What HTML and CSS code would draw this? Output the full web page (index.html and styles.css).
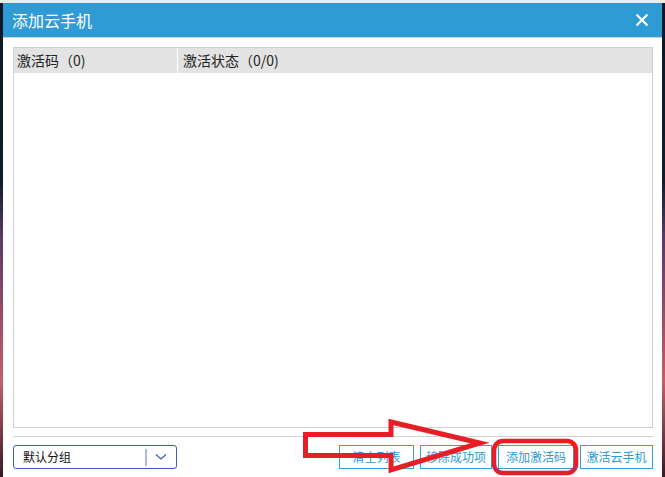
FILE: index.html
```html
<!DOCTYPE html>
<html lang="zh-CN">
<head>
    <meta charset="UTF-8">
    <title>添加云手机</title>
    <link rel="stylesheet" href="styles.css">
</head>
<body>
    <div class="dialog">
        <div class="titlebar">
            <span class="title">添加云手机</span>
            <svg class="close" width="14" height="14" viewBox="0 0 14 14">
                <path d="M1.5 1.5 L12.5 12.5 M12.5 1.5 L1.5 12.5" stroke="#fff" stroke-width="2.2" fill="none"/>
            </svg>
        </div>
        <div class="content">
            <div class="list">
                <div class="list-head">
                    <div class="col">激活码（0)</div>
                    <div class="col">激活状态（0/0)</div>
                </div>
            </div>
            <div class="sep"></div>
            <div class="footer">
                <div class="select">
                    <span class="select-text">默认分组</span>
                    <span class="select-line"></span>
                    <svg class="chevron" width="12" height="8" viewBox="0 0 12 8">
                        <polyline points="1,1.5 6,6 11,1.5" stroke="#3b5fc9" stroke-width="1.3" fill="none"/>
                    </svg>
                </div>
                <div class="buttons">
                    <button class="btn btn-clear">清空列表</button>
                    <button class="btn btn-remove">移除成功项</button>
                    <button class="btn btn-add">添加激活码</button>
                    <button class="btn btn-activate">激活云手机</button>
                </div>
            </div>
        </div>
    </div>

    <!-- red annotation drawn over the screenshot -->
    <svg class="annotation" width="665" height="477" viewBox="0 0 665 477">
        <path d="M305.5 434.5 L391 434.5 L391 422 L480 443 L391 470 L391 455.5 L305.5 455.5 Z"
              stroke="#e81e26" stroke-width="5" fill="none" stroke-linejoin="miter"/>
        <rect x="494" y="441" width="82" height="32" rx="9" ry="9"
              stroke="#e81e26" stroke-width="4.5" fill="none"/>
    </svg>
</body>
</html>
```

FILE: styles.css
```css
body {
    margin: 0;
    padding: 0 3px;
    border-top: 3px solid #ececec;
    height: 474px;
    overflow: hidden;
    position: relative;
    font-family: "Noto Sans CJK SC", "Liberation Sans", sans-serif;
    background: linear-gradient(to bottom, #0c1826 0%, #101c2a 38%, #5a3a6a 50%, #a85066 70%, #c0606a 80%, #3a1826 100%);
}
.dialog {
    width: 659px;
    height: 474px;
    background-color: #fff;
}
.titlebar {
    height: 34px;
    background-color: #2f9bd4;
    color: #fff;
    display: flex;
    align-items: center;
    justify-content: space-between;
    padding: 0 13px 0 9px;
    border-bottom: 1px solid #d4d4d4;
}
.title {
    font-size: 16px;
    line-height: 20px;
}
.close {
    display: block;
}
.content {
    padding: 9px 9px 0 10px;
}
.list {
    height: 379px;
    border: 1px solid #cfcfcf;
}
.list-head {
    display: grid;
    grid-template-columns: 163px 1fr;
    column-gap: 1px;
    background-color: #fff;
    height: 25px;
}
.col {
    background-color: #e3e3e3;
    font-size: 14px;
    line-height: 25px;
    padding-left: 3px;
    color: #222;
}
.col + .col {
    padding-left: 5px;
}
.sep {
    height: 1px;
    background-color: #d2d2d2;
    margin-top: 8px;
}
.footer {
    margin-top: 8px;
    display: flex;
    align-items: center;
    justify-content: space-between;
}
.select {
    width: 162px;
    height: 22px;
    border: 1px solid #3b5fc9;
    border-radius: 3px;
    display: flex;
    align-items: center;
}
.select-text {
    font-size: 12px;
    line-height: 16px;
    color: #111;
    padding-left: 9px;
    flex: 1;
}
.select-line {
    width: 2px;
    height: 17px;
    background-color: #a9b8ec;
}
.chevron {
    margin: 0 9px 0 8px;
}
.buttons {
    display: flex;
    gap: 6px;
}
.btn {
    height: 24px;
    border: 1px solid #3a9fd8;
    background-color: #fff;
    color: #2e9ad3;
    font-family: "Noto Sans CJK SC", "Liberation Sans", sans-serif;
    font-size: 12px;
    line-height: 16px;
    padding: 0;
    border-radius: 0;
}
.btn-clear {
    width: 75px;
}
.btn-remove {
    width: 72px;
}
.btn-add {
    width: 76px;
}
.btn-activate {
    width: 73px;
}
.annotation {
    position: absolute;
    left: 0;
    top: -3px;
    pointer-events: none;
}
```
